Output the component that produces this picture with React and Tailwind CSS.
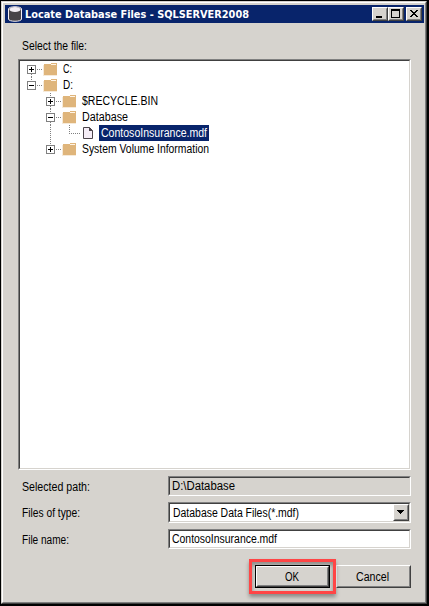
import React from "react";

const textFont = "font-['Liberation_Sans',Arial,sans-serif] text-[12px] leading-4 whitespace-pre";

/* Each tree cell is 19px wide; its guide line runs through x = 9. */
function Toggle({ open, up, down }) {
  return (
    <svg width="21" height="16" className="block shrink-0" shapeRendering="crispEdges">
      {up && <path d="M9.5 0V4" stroke="#808080" strokeDasharray="1 1" />}
      {down && <path d="M9.5 13V16" stroke="#808080" strokeDasharray="1 1" />}
      <path d="M15 8.5H21" stroke="#808080" strokeDasharray="1 1" />
      <rect x="5.5" y="4.5" width="8" height="8" fill="#fff" stroke="#808080" />
      <path d="M7 8.5H12" stroke="#000" />
      {!open && <path d="M9.5 6V11" stroke="#000" />}
    </svg>
  );
}

function Folder() {
  return (
    <svg width="16" height="16" className="block shrink-0" shapeRendering="crispEdges">
      <path d="M1 3H8V2H14V14H1Z" fill="#dfb57b" />
      <path d="M8 3.5H13" stroke="#fff4e6" />
      <path d="M0.5 4V14.5H14" stroke="#f6ead9" fill="none" />
    </svg>
  );
}

function FileIcon() {
  return (
    <svg width="16" height="16" className="block shrink-0">
      <path d="M1.5 2.5H7.5L10.5 5.5V13.5H1.5Z" fill="#f5edf6" stroke="#4b444a" />
      <path d="M7 2V6H11Z" fill="#4b444a" />
    </svg>
  );
}

function TreeRow({ label, level = 0, open, up, down, width }) {
  return (
    <div className={`flex h-4 ${level ? "pl-[19px]" : ""}`}>
      <Toggle open={open} up={up} down={down} />
      <Folder />
      <Label width={width} className="ml-1">{label}</Label>
    </div>
  );
}

/* Text is fitted to the dialog font's advance width. */
function Label({ children, width, className = "" }) {
  return (
    <svg width={width + 2} height="16" className={`block shrink-0 overflow-visible ${className}`}>
      <text x="0" y="12" textLength={width} lengthAdjust="spacingAndGlyphs" fill="currentColor" className={textFont}>
        {children}
      </text>
    </svg>
  );
}

function Sunken({ className = "", children }) {
  return (
    <div className={`border border-t-[#808080] border-l-[#808080] border-r-white border-b-white ${className}`}>
      <div className="flex h-full w-full border border-t-[#404040] border-l-[#404040] border-r-[#d6d3ce] border-b-[#d6d3ce]">
        {children}
      </div>
    </div>
  );
}

function Raised({ className = "", children }) {
  return (
    <div className={`border border-t-white border-l-white border-r-[#404040] border-b-[#404040] bg-[#d6d3ce] ${className}`}>
      <div className="flex h-full w-full items-center justify-center border border-t-[#d6d3ce] border-l-[#d6d3ce] border-r-[#808080] border-b-[#808080]">
        {children}
      </div>
    </div>
  );
}

export default function App() {
  return (
    <div className="h-[606px] w-[429px] overflow-hidden bg-black pt-px pl-px text-black">
      <div className="h-[603px] w-[426px] border border-t-[#d6d3ce] border-l-[#d6d3ce] border-r-[#404040] border-b-[#404040] bg-[#d6d3ce]">
        <div className="h-full w-full border border-t-white border-l-white border-r-[#808080] border-b-[#808080] pt-[2px] pl-[2px]">
          <header className="flex h-[18px] w-[419px] items-center bg-[#08246b] pr-[2px] pl-[3px] text-white">
            <svg width="14" height="16" className="block shrink-0">
              <path d="M0.5 3C0.5 0 13.5 0 13.5 3V13C13.5 16 0.5 16 0.5 13Z" fill="#484448" stroke="#f3eef4" />
              <ellipse cx="7" cy="3.5" rx="5.5" ry="2.5" fill="#f3eef4" />
            </svg>
            <svg width="228" height="16" className="ml-[3px] block overflow-visible">
              <text x="0" y="12" textLength="224" lengthAdjust="spacingAndGlyphs" fill="currentColor" className="font-['DejaVu_Sans_Condensed','DejaVu_Sans',sans-serif] text-[11px] font-bold">
                Locate Database Files - SQLSERVER2008
              </text>
            </svg>
            <div className="ml-auto flex">
              <Raised className="h-[14px] w-4">
                <svg width="12" height="10" shapeRendering="crispEdges"><path d="M2 8H8" stroke="#000" strokeWidth="2" /></svg>
              </Raised>
              <Raised className="h-[14px] w-4">
                <svg width="12" height="10" shapeRendering="crispEdges"><path d="M1.5 0V8.5H9.5V0" fill="none" stroke="#000" /><path d="M1 1H10" stroke="#000" strokeWidth="2" /></svg>
              </Raised>
              <Raised className="ml-[2px] h-[14px] w-4">
                <svg width="12" height="10" shapeRendering="crispEdges"><path d="M2 1h2v1h1v1h2v-1h1v-1h2v1h-1v1h-1v1h-1v1h1v1h1v1h1v1h-2v-1h-1v-1h-2v1h-1v1h-2v-1h1v-1h1v-1h1v-1h-1v-1h-1v-1h-1z" fill="#000" /></svg>
              </Raised>
            </div>
          </header>
          <main className="w-[406px] pt-[15px] pl-[13px]">
            <Label width={65} className="ml-1">Select the file:</Label>
            <Sunken className="mt-[5px] h-[411px] w-[393px] bg-white">
              <div className="pl-[2px]">
                <TreeRow label="C:" width={9} down />
                <TreeRow label="D:" width={10} open up />
                <TreeRow label="$RECYCLE.BIN" width={76} level={1} up down />
                <TreeRow label="Database" width={46} level={1} open up down />
                <div className="flex h-4 pl-[19px]">
                  <svg width="41" height="16" className="block shrink-0" shapeRendering="crispEdges">
                    <path d="M9.5 0V16M28.5 0V8M28 8.5H40" fill="none" stroke="#808080" strokeDasharray="1 1" />
                  </svg>
                  <FileIcon />
                  <div className="ml-px h-4 w-[110px] bg-[#08246b] pl-[2px] text-white">
                    <Label width={106}>ContosoInsurance.mdf</Label>
                  </div>
                </div>
                <TreeRow label="System Volume Information" width={127} level={1} up />
              </div>
            </Sunken>
            <div className="mt-[6px] flex h-5 items-center">
              <Label width={68} className="mt-[2px] ml-1">Selected path:</Label>
              <Sunken className="ml-auto h-5 w-[243px]">
                <Label width={63} className="ml-[2px]">D:\Database</Label>
              </Sunken>
            </div>
            <div className="mt-[6px] flex h-[21px] items-center">
              <Label width={58} className="ml-1">Files of type:</Label>
              <Sunken className="ml-auto h-[21px] w-[243px] bg-white">
                <Label width={126} className="mt-px ml-[3px]">Database Data Files(*.mdf)</Label>
                <Raised className="ml-auto h-[17px] w-4">
                  <svg width="12" height="13" shapeRendering="crispEdges"><path d="M2 4H9V5H8V6H7V7H6V8H5V7H4V6H3V5H2Z" fill="#000" /></svg>
                </Raised>
              </Sunken>
            </div>
            <div className="mt-[6px] flex h-5 items-center">
              <Label width={47} className="mt-[2px] ml-1">File name:</Label>
              <Sunken className="ml-auto h-5 w-[243px] bg-white">
                <Label width={105} className="ml-[2px]">ContosoInsurance.mdf</Label>
              </Sunken>
            </div>
            <div className="mt-[10px] flex justify-end">
              <div className="z-10 h-[35px] w-[87px] border-[3px] border-[#ff4545] p-[3px] shadow-[0_3px_4px_rgba(0,0,0,0.35),inset_0_3px_4px_rgba(0,0,0,0.35)]">
                <div className="h-[23px] w-[75px] border border-black">
                  <Raised className="h-full w-full"><Label width={14}>OK</Label></Raised>
                </div>
              </div>
              <Raised className="mt-[6px] h-[23px] w-[75px]"><Label width={33}>Cancel</Label></Raised>
            </div>
          </main>
        </div>
      </div>
    </div>
  );
}
